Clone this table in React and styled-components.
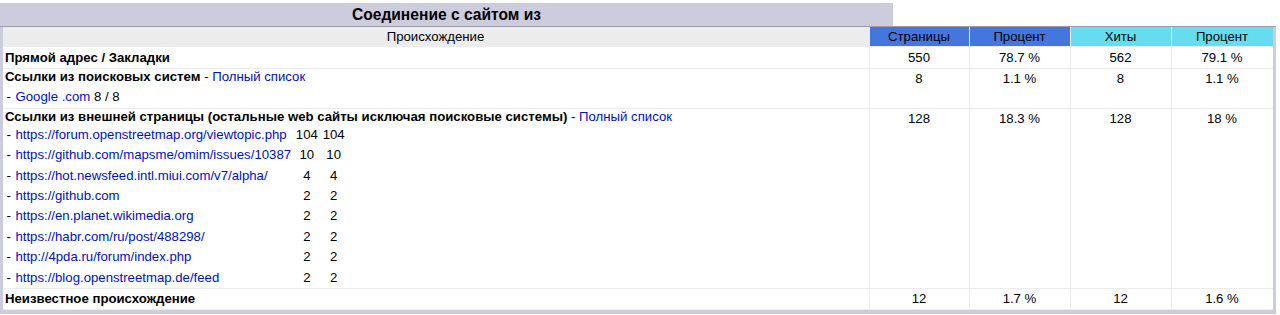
import React from 'react';
import styled, { createGlobalStyle } from 'styled-components';

const Global = createGlobalStyle`
  html, body { margin: 0; padding: 0; background: #ffffff; }
  body {
    font-family: "Liberation Sans", Arial, Helvetica, sans-serif;
    font-size: 13.2px;
    color: #000000;
  }
`;

const Frame = styled.section`
  width: 1276px;
  margin-top: 3px;
`;

const TitleBar = styled.div`
  display: grid;
  grid-template-columns: 893px 1fr;
  height: 23px;
`;

const Title = styled.h2`
  margin: 0;
  background: #ccccdd;
  font-size: 15.6px;
  font-weight: bold;
  display: flex;
  align-items: center;
  justify-content: center;
`;

const Blank = styled.div`
  background: #ffffff;
`;

const Border = styled.div`
  background: #ccccdd;
  border-top: 1px solid #9a9aa8;
  padding: 0 3px 4px;
`;

const Data = styled.div`
  display: grid;
  grid-template-columns: 1fr 100px 101px 101px 101px;
  background: #ffffff;
`;

const Head = styled.div`
  background: ${(p) => p.$bg || '#ececec'};
  padding: 1.7px 2px 1.7px 1px;
  line-height: 15.6px;
  text-align: center;
  border-right: ${(p) => (p.$last ? 'none' : '1px solid #ececec')};
  border-bottom: 1px solid #ececec;
`;

const Num = styled.div`
  padding: ${(p) => (p.$tall ? '3px 2px 2.4px 1px' : '2.4px 2px 2.4px 1px')};
  line-height: 15.6px;
  text-align: center;
  border-right: ${(p) => (p.$last ? 'none' : '1px solid #ececec')};
  border-bottom: 1px solid #ececec;
`;

const Origin = styled.div`
  padding: ${(p) => (p.$list ? '0' : p.$tall ? '3px 2px 2.4px' : '2.4px 2px')};
  line-height: 15.6px;
  text-align: left;
  border-right: 1px solid #ececec;
  border-bottom: 1px solid #ececec;
`;

const Heading = styled.div`
  padding: 0 2px;
  line-height: 15.6px;
`;

const Strong = styled.b`
  font-weight: bold;
`;

const Link = styled.a`
  color: #0011bb;
  text-decoration: none;
  margin-left: ${(p) => (p.$gap ? '1px' : '0')};
`;

const EngineLine = styled.div`
  padding: 4.4px 2.4px 3.4px 3.4px;
  line-height: 15.6px;
`;

const Refs = styled.div`
  display: grid;
  grid-template-columns: max-content max-content max-content;
  padding-left: 1px;
`;

const RefCell = styled.div`
  padding: 2.4px;
  line-height: 15.6px;
  text-align: ${(p) => (p.$num ? 'center' : 'left')};
  white-space: nowrap;
`;

const heads = [
  { label: 'Страницы', bg: '#4477dd' },
  { label: 'Процент', bg: '#4477dd' },
  { label: 'Хиты', bg: '#66ddee' },
  { label: 'Процент', bg: '#66ddee' },
];

const refs = [
  ['https://forum.openstreetmap.org/viewtopic.php', 104, 104],
  ['https://github.com/mapsme/omim/issues/10387', 10, 10],
  ['https://hot.newsfeed.intl.miui.com/v7/alpha/', 4, 4],
  ['https://github.com', 2, 2],
  ['https://en.planet.wikimedia.org', 2, 2],
  ['https://habr.com/ru/post/488298/', 2, 2],
  ['http://4pda.ru/forum/index.php', 2, 2],
  ['https://blog.openstreetmap.de/feed', 2, 2],
];

function Nums({ values, tall }) {
  return values.map((v, i) => (
    <Num key={i} $tall={tall} $last={i === values.length - 1}>
      {v}
    </Num>
  ));
}

export default function App() {
  return (
    <>
      <Global />
      <Frame>
        <TitleBar>
          <Title>Соединение с сайтом из</Title>
          <Blank />
        </TitleBar>
        <Border>
          <Data>
            <Head>Происхождение</Head>
            {heads.map((h, i) => (
              <Head key={i} $bg={h.bg} $last={i === heads.length - 1}>
                {h.label}
              </Head>
            ))}

            <Origin $tall>
              <Strong>Прямой адрес / Закладки</Strong>
            </Origin>
            <Nums tall values={['550', '78.7 %', '562', '79.1 %']} />

            <Origin $list>
              <Heading>
                <Strong>Ссылки из поисковых систем</Strong> -{' '}
                <Link href="#">Полный список</Link>
              </Heading>
              <EngineLine>
                - <Link $gap href="#">Google .com</Link> 8 / 8
              </EngineLine>
            </Origin>
            <Nums values={['8', '1.1 %', '8', '1.1 %']} />

            <Origin $list>
              <Heading>
                <Strong>
                  Ссылки из внешней страницы (остальные web сайты исключая
                  поисковые системы)
                </Strong>{' '}
                - <Link href="#">Полный список</Link>
              </Heading>
              <Refs>
                {refs.map(([url, p, h]) => (
                  <React.Fragment key={url}>
                    <RefCell>
                      - <Link $gap href="#">{url}</Link>
                    </RefCell>
                    <RefCell $num>{p}</RefCell>
                    <RefCell $num>{h}</RefCell>
                  </React.Fragment>
                ))}
              </Refs>
            </Origin>
            <Nums values={['128', '18.3 %', '128', '18 %']} />

            <Origin>
              <Strong>Неизвестное происхождение</Strong>
            </Origin>
            <Nums values={['12', '1.7 %', '12', '1.6 %']} />
          </Data>
        </Border>
      </Frame>
    </>
  );
}
